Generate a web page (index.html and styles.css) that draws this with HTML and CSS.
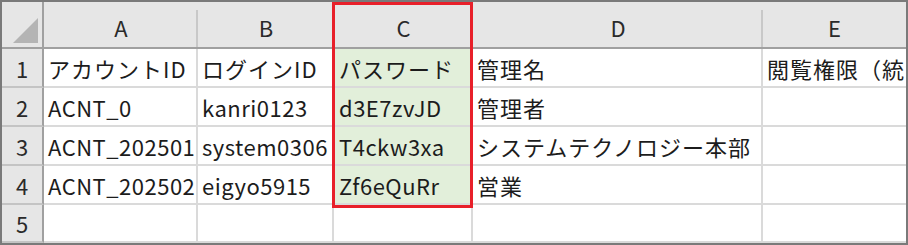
FILE: index.html
```html
<!DOCTYPE html>
<html lang="ja">
<head>
<meta charset="utf-8">
<link rel="stylesheet" href="styles.css">
</head>
<body>
<div class="sheet">
  <div class="grid">
    <div class="corner"><svg class="tri" width="26" height="26" viewBox="0 0 26 26"><polygon points="25,0 25,25 0,25" fill="#b4b4b4"/></svg></div>
    <div class="colhead">A</div>
    <div class="colhead">B</div>
    <div class="colhead">C</div>
    <div class="colhead">D</div>
    <div class="colhead last">E</div>

    <div class="rowhead">1</div>
    <div class="cell jp">アカウントID</div>
    <div class="cell jp">ログインID</div>
    <div class="cell jp pw">パスワード</div>
    <div class="cell jp">管理名</div>
    <div class="cell jp last">閲覧権限（統</div>

    <div class="rowhead">2</div>
    <div class="cell">ACNT_0</div>
    <div class="cell">kanri0123</div>
    <div class="cell pw">d3E7zvJD</div>
    <div class="cell jp">管理者</div>
    <div class="cell last"></div>

    <div class="rowhead">3</div>
    <div class="cell">ACNT_202501</div>
    <div class="cell">system0306</div>
    <div class="cell pw">T4ckw3xa</div>
    <div class="cell jp">システムテクノロジー本部</div>
    <div class="cell last"></div>

    <div class="rowhead">4</div>
    <div class="cell">ACNT_202502</div>
    <div class="cell">eigyo5915</div>
    <div class="cell pw">Zf6eQuRr</div>
    <div class="cell jp">営業</div>
    <div class="cell last"></div>

    <div class="rowhead">5</div>
    <div class="cell"></div>
    <div class="cell"></div>
    <div class="cell"></div>
    <div class="cell"></div>
    <div class="cell last"></div>
  </div>
  <div class="highlight"></div>
</div>
</body>
</html>
```
FILE: styles.css
```css
html, body {
  margin: 0;
  padding: 0;
  background: #ffffff;
}
.sheet {
  position: relative;
  width: 908px;
  height: 245px;
  box-sizing: border-box;
  border: 2px solid #7a7a7a;
  overflow: hidden;
  font-family: "Noto Sans CJK JP", "Noto Sans", sans-serif;
  font-size: 22px;
  color: #1c1c1c;
}
.grid {
  display: grid;
  grid-template-columns: 42px 154px 136px 139px 290px 143px;
  grid-template-rows: 47px 39px 39px 39px 39px 38px;
}
.corner {
  background: #e6e6e6;
  border-right: 2px solid #a0a0a0;
  border-bottom: 2px solid #a0a0a0;
  box-sizing: border-box;
}
.tri {
  display: block;
  margin: 16px 0 0 11px;
}
.colhead {
  background: linear-gradient(#c8c8c8, #c8c8c8) right 8px / 2px calc(100% - 8px) no-repeat, #e6e6e6;
  border-bottom: 2px solid #a0a0a0;
  box-sizing: border-box;
  display: flex;
  align-items: center;
  justify-content: center;
  padding-top: 4px;
  color: #2a2a2a;
}
.colhead.last {
  background: #e6e6e6;
}
.rowhead {
  background: #e6e6e6;
  border-right: 2px solid #a0a0a0;
  border-bottom: 2px solid #c4c4c4;
  box-sizing: border-box;
  display: flex;
  align-items: center;
  justify-content: center;
  color: #2a2a2a;
}
.cell {
  border-right: 2px solid #dadada;
  border-bottom: 2px solid #dadada;
  box-sizing: border-box;
  display: flex;
  align-items: center;
  padding-left: 4px;
  white-space: nowrap;
  overflow: hidden;
  letter-spacing: 0.5px;
}
.cell.jp {
  letter-spacing: 1px;
}
.cell.last {
  border-right: none;
}
.cell.pw {
  background: #e2efda;
  padding-left: 5px;
}
.highlight {
  position: absolute;
  left: 330px;
  top: 0;
  width: 141px;
  height: 206px;
  box-sizing: border-box;
  border: 3px solid #e8202a;
  pointer-events: none;
}
```
